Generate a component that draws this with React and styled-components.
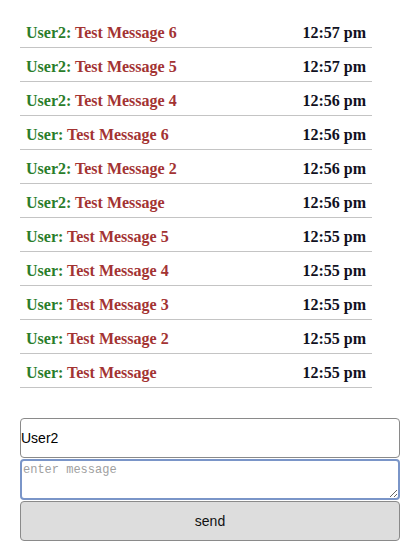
import styled, { createGlobalStyle } from 'styled-components'

const GlobalStyle = createGlobalStyle`
  body {
    margin: 0;
    background: #fff;
    font-family: "Liberation Serif", serif;
  }
`

const Page = styled.div`
  display: flex;
  flex-direction: column;
  padding: 14px 20px 0 20px;
`

const List = styled.ul`
  list-style: none;
  margin: 0;
  padding: 0;
  width: 352px;
`

const Row = styled.li`
  display: flex;
  align-items: center;
  justify-content: space-between;
  height: 28px;
  padding: 5px 6px 0 6px;
  border-bottom: 1px solid #c4c4c4;
  font-weight: bold;
  font-size: 16px;
`

const Name = styled.span`
  color: #2a7d2a;
`

const Text = styled.span`
  color: #a33333;
`

const Time = styled.span`
  color: #111122;
`

const Form = styled.form`
  display: flex;
  flex-direction: column;
  gap: 1px;
  margin-top: 30px;
  width: 380px;
`

const NameInput = styled.input`
  box-sizing: border-box;
  height: 40px;
  padding: 0;
  border: 1px solid #8a8a8a;
  border-radius: 4px;
  font-family: "Liberation Sans", Arial, sans-serif;
  font-size: 14px;
  color: #000;
  outline: none;
`

const MessageArea = styled.textarea`
  box-sizing: border-box;
  height: 41px;
  padding: 2px 1px;
  border: 2px solid #7a95c8;
  border-radius: 4px;
  font-family: "Liberation Mono", monospace;
  font-size: 12px;
  outline: none;
  resize: vertical;
  &::placeholder {
    color: #a0a0a0;
  }
`

const SendButton = styled.button`
  box-sizing: border-box;
  height: 40px;
  border: 1px solid #8a8a8a;
  border-radius: 4px;
  background: #dddddd;
  font-family: "Liberation Sans", Arial, sans-serif;
  font-size: 14px;
  color: #111;
`

const messages = [
  { user: 'User2', text: 'Test Message 6', time: '12:57 pm' },
  { user: 'User2', text: 'Test Message 5', time: '12:57 pm' },
  { user: 'User2', text: 'Test Message 4', time: '12:56 pm' },
  { user: 'User', text: 'Test Message 6', time: '12:56 pm' },
  { user: 'User2', text: 'Test Message 2', time: '12:56 pm' },
  { user: 'User2', text: 'Test Message', time: '12:56 pm' },
  { user: 'User', text: 'Test Message 5', time: '12:55 pm' },
  { user: 'User', text: 'Test Message 4', time: '12:55 pm' },
  { user: 'User', text: 'Test Message 3', time: '12:55 pm' },
  { user: 'User', text: 'Test Message 2', time: '12:55 pm' },
  { user: 'User', text: 'Test Message', time: '12:55 pm' },
]

export default function App() {
  return (
    <Page>
      <GlobalStyle />
      <List>
        {messages.map((m, i) => (
          <Row key={i}>
            <span>
              <Name>{m.user}: </Name>
              <Text>{m.text}</Text>
            </span>
            <Time>{m.time}</Time>
          </Row>
        ))}
      </List>
      <Form onSubmit={e => e.preventDefault()}>
        <NameInput defaultValue="User2" />
        <MessageArea placeholder="enter message" />
        <SendButton type="submit">send</SendButton>
      </Form>
    </Page>
  )
}
